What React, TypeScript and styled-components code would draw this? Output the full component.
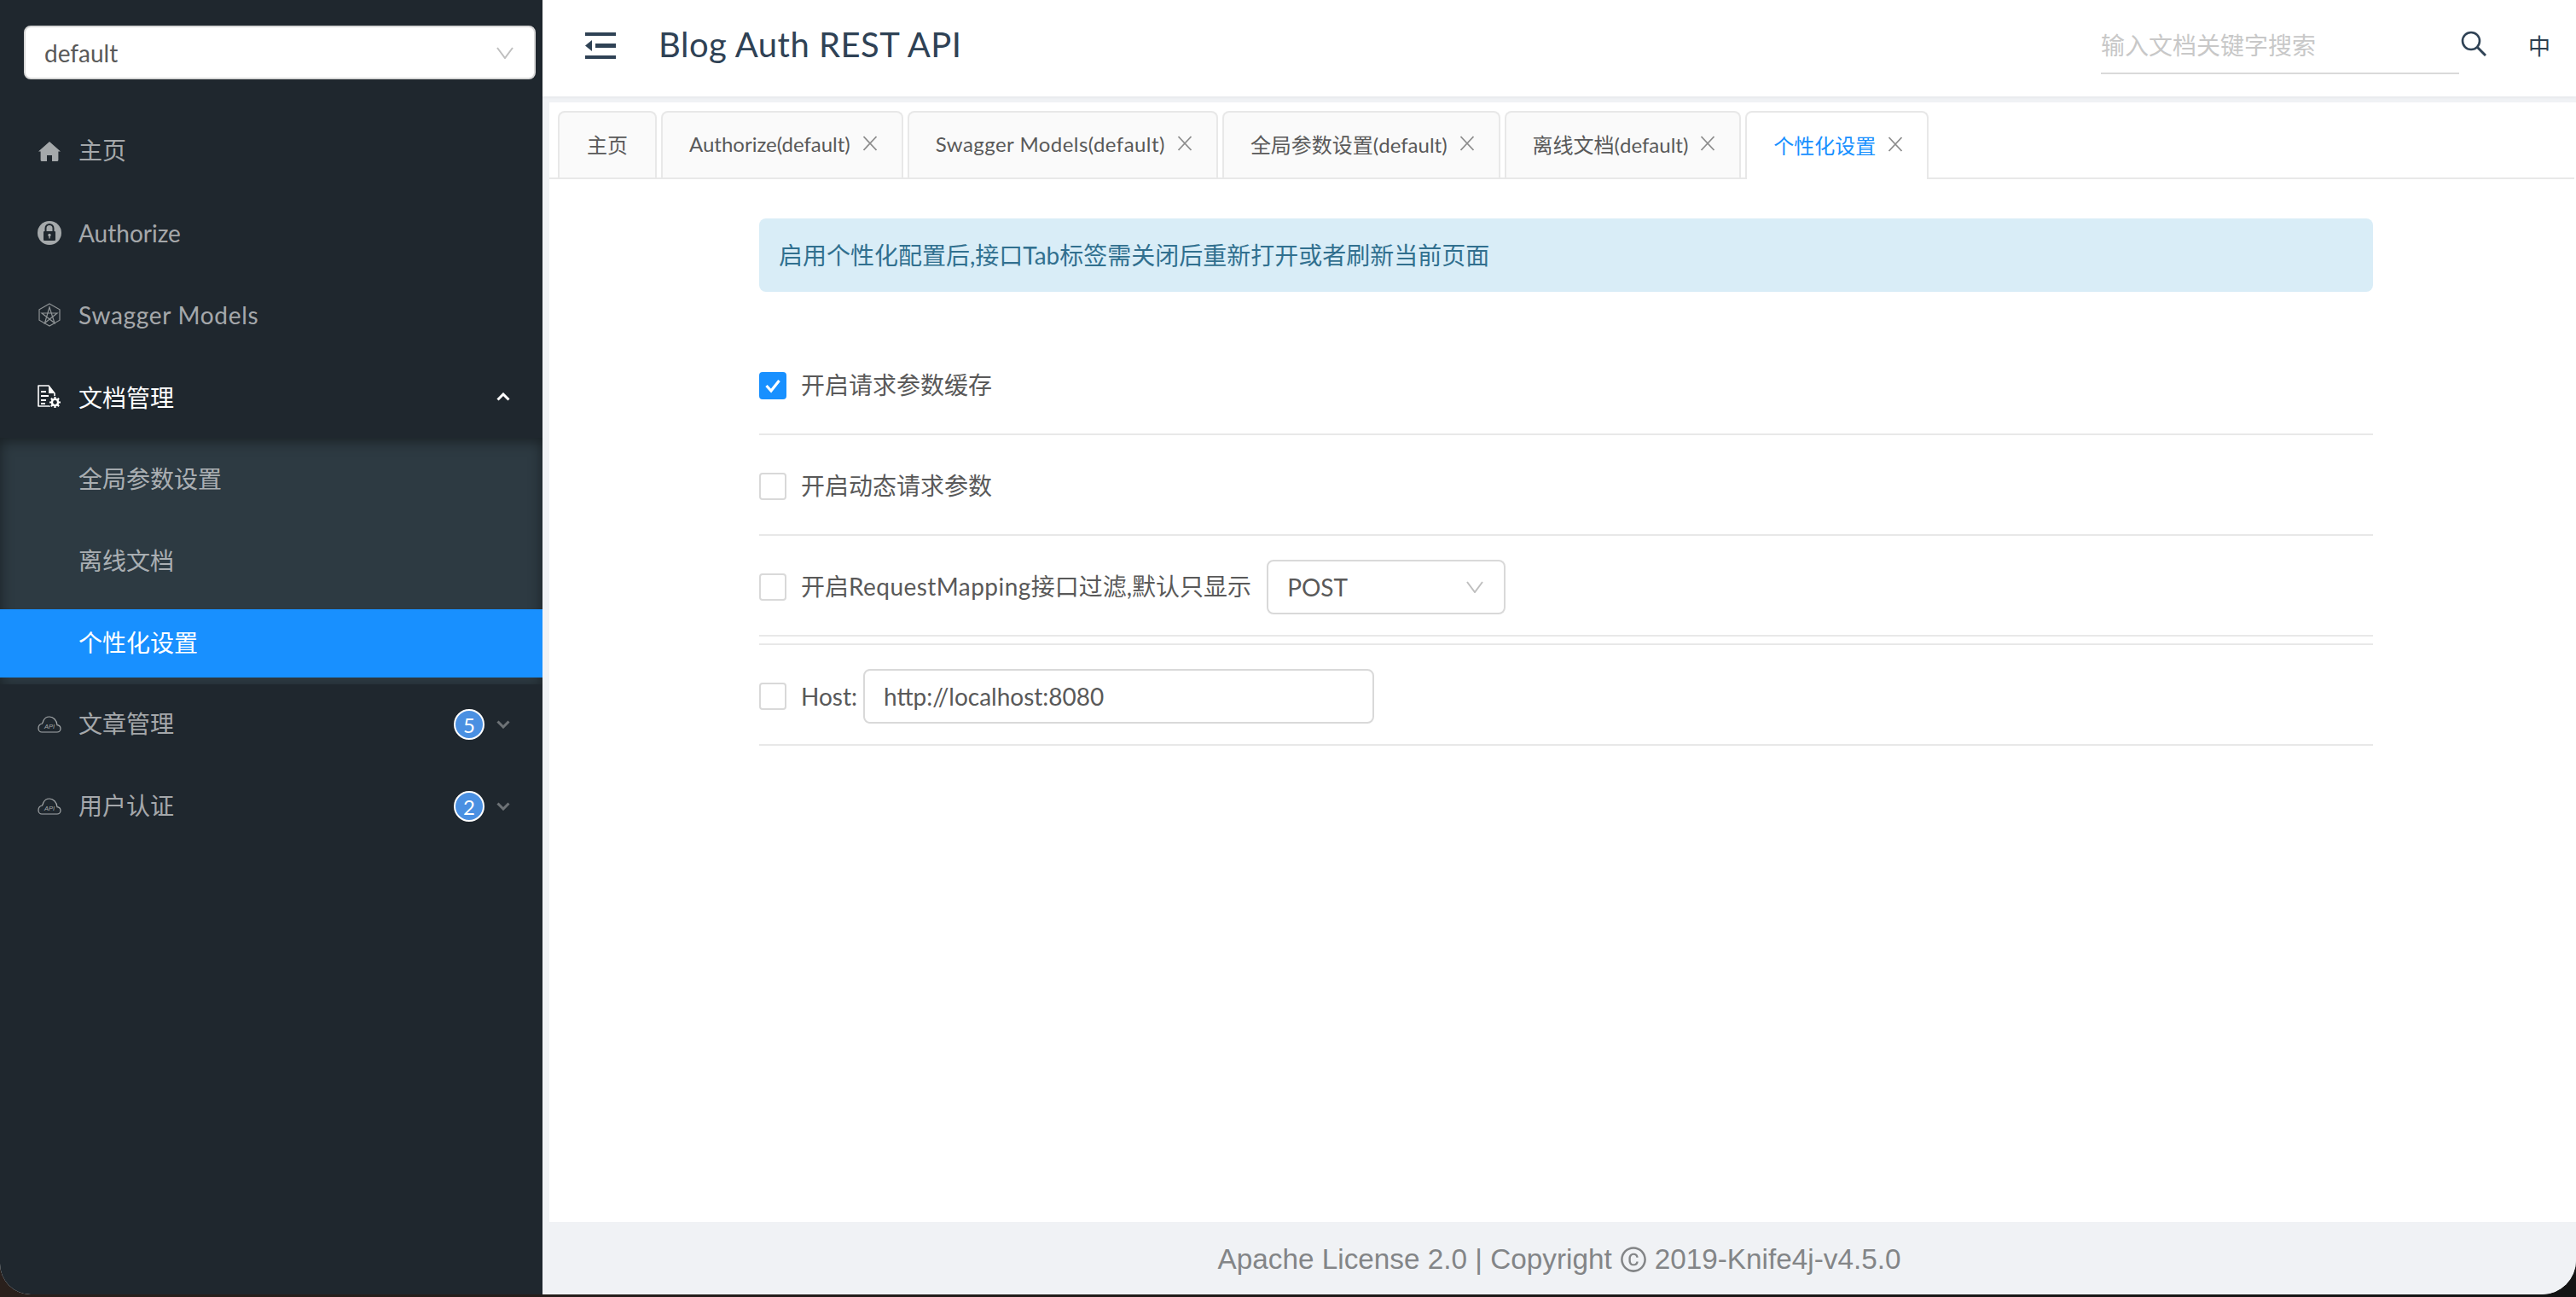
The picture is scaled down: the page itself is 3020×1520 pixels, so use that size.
import * as React from "react";
import styled, { createGlobalStyle } from "styled-components";
import { AiOutlineCopyright } from "react-icons/ai";

const FONT = `Lato, "Noto Sans CJK SC", sans-serif`;

const GlobalStyle = createGlobalStyle`
  html, body {
    margin: 0;
    padding: 0;
    background: #1a1a1a;
  }
  * {
    box-sizing: border-box;
  }
`;

const Page = styled.div`
  width: 3020px;
  height: 1520px;
  overflow: hidden;
  background: linear-gradient(to right, #2a201c 0, #141414 100%);
  font-family: ${FONT};
`;

const Window = styled.div`
  display: flex;
  width: 3020px;
  height: 1517px;
  overflow: hidden;
  border-radius: 0 0 40px 36px;
  background: #f0f2f5;
`;

/* sidebar */
const Sidebar = styled.aside`
  width: 636px;
  flex: none;
  padding-top: 30px;
  background: #1f272e;
`;

const SideSelect = styled.div`
  display: flex;
  align-items: center;
  justify-content: space-between;
  width: 600px;
  height: 63px;
  margin-left: 28px;
  padding: 0 24px 0 22px;
  border: 2px solid #d9d9d9;
  border-radius: 8px;
  background: #fff;
  color: #595959;
  font-size: 28px;
`;

const Menu = styled.nav`
  margin-top: 44px;
`;

const Item = styled.div<{ $active?: boolean; $open?: boolean; $indent?: boolean }>`
  display: flex;
  align-items: center;
  height: 80px;
  margin-bottom: 16px;
  padding: 0 38px 0 ${(p) => (p.$indent ? "92px" : "44px")};
  background: ${(p) => (p.$active ? "#1890ff" : "transparent")};
  color: ${(p) => (p.$active || p.$open ? "#fff" : "rgba(255, 255, 255, 0.62)")};
  font-size: 28px;
`;

const SubMenu = styled.div`
  margin: -8px 0 7px;
  padding: 9px 0 8px;
  background: #2d3a42;
  box-shadow: inset 0 4px 16px rgba(0, 0, 0, 0.45);

  & > ${Item}:last-child {
    margin-bottom: 0;
  }
`;

const IconSlot = styled.span`
  display: flex;
  align-items: center;
  justify-content: center;
  width: 28px;
  height: 28px;
  margin-right: 20px;
  flex: none;
`;

const ItemText = styled.span<{ $cjk?: boolean }>`
  flex: 1;
  padding-bottom: ${(p) => (p.$cjk ? "4px" : "0")};
`;

const Spaced = styled.span<{ $by: string }>`
  letter-spacing: ${(p) => p.$by};
`;

const Badge = styled.span`
  display: flex;
  align-items: center;
  justify-content: center;
  width: 36px;
  height: 36px;
  margin-right: 14px;
  border: 2px solid #fff;
  border-radius: 50%;
  background: #4a90e2;
  color: #fff;
  font-size: 24px;
`;

/* main column */
const Main = styled.main`
  display: flex;
  flex-direction: column;
  flex: 1;
  min-width: 0;
`;

const Header = styled.header`
  display: flex;
  align-items: center;
  height: 113px;
  padding-left: 50px;
  background: #fff;
  box-shadow: 0 1px 4px rgba(0, 21, 41, 0.06);
`;

const FoldWrap = styled.span`
  display: flex;
  margin-bottom: 6px;
`;

const Title = styled.h1`
  flex: 1;
  margin: 0 0 9px 50px;
  color: #2f4255;
  font-size: 40px;
  font-weight: 400;
  letter-spacing: 0.5px;
`;

const SearchBox = styled.div`
  display: flex;
  align-items: center;
  width: 420px;
  height: 60px;
  padding-bottom: 8px;
  border-bottom: 2px solid #d9d9d9;
  color: #c8c8c8;
  font-size: 28px;
`;

const SearchIconWrap = styled.span`
  display: flex;
  margin: 0 49px 12px 2px;
`;

const Lang = styled.span`
  margin-right: 30px;
  margin-bottom: 8px;
  color: #2c3e50;
  font-size: 26px;
`;

const Content = styled.section`
  display: flex;
  flex-direction: column;
  flex: 1;
  min-height: 0;
  margin: 7px 0 0 8px;
  background: #fff;
`;

const TabBar = styled.div`
  display: flex;
  gap: 5px;
  height: 80px;
  margin: 10px 2px 0 0;
  padding-left: 10px;
  border-bottom: 2px solid #e8e8e8;
`;

const Tab = styled.div<{ $active?: boolean; $closable?: boolean }>`
  display: flex;
  align-items: center;
  gap: 14px;
  height: ${(p) => (p.$active ? "80px" : "78px")};
  padding: 0 ${(p) => (p.$closable ? "28px" : "32px")} 4px ${(p) => (p.$closable ? "31px" : "32px")};
  border: 2px solid #e8e8e8;
  border-bottom: none;
  border-radius: 8px 8px 0 0;
  background: ${(p) => (p.$active ? "#fff" : "#fafafa")};
  color: ${(p) => (p.$active ? "#1890ff" : "#595959")};
  font-size: 24px;
`;

const Panel = styled.div`
  width: 1892px;
  margin: 46px 0 0 246px;
`;

const Alert = styled.div`
  display: flex;
  align-items: center;
  height: 86px;
  margin-bottom: 50px;
  padding: 0 0 3px 23px;
  border-radius: 8px;
  background: #d9edf7;
  color: #31708f;
  font-size: 28px;
`;

const Row = styled.div<{ $split?: boolean }>`
  display: flex;
  align-items: center;
  height: ${(p) => (p.$split ? "120px" : "118px")};
  padding-top: 28px;
  padding-bottom: 24px;
  margin-top: ${(p) => (p.$split ? "8px" : "0")};
  border-top: ${(p) => (p.$split ? "2px solid #e8e8e8" : "none")};
  border-bottom: 2px solid #e8e8e8;
`;

const Check = styled.span<{ $checked?: boolean }>`
  display: flex;
  align-items: center;
  justify-content: center;
  width: 32px;
  height: 32px;
  flex: none;
  border: 2px solid ${(p) => (p.$checked ? "#1890ff" : "#d9d9d9")};
  border-radius: 4px;
  background: ${(p) => (p.$checked ? "#1890ff" : "#fff")};
`;

const Label = styled.span<{ $cjk?: boolean }>`
  margin-left: 17px;
  padding-bottom: ${(p) => (p.$cjk ? "4px" : "0")};
  color: #595959;
  font-size: 28px;
`;

const FieldSelect = styled.div`
  display: flex;
  align-items: center;
  justify-content: space-between;
  width: 280px;
  height: 64px;
  margin-left: 18px;
  padding: 0 24px 0 22px;
  border: 2px solid #d9d9d9;
  border-radius: 8px;
  color: #595959;
  font-size: 28px;
`;

const HostInput = styled.div`
  display: flex;
  align-items: center;
  width: 599px;
  height: 64px;
  margin-left: 7px;
  padding: 0 22px;
  border: 2px solid #d9d9d9;
  border-radius: 8px;
  color: #595959;
  font-size: 28px;
`;

const Footer = styled.footer`
  display: flex;
  align-items: center;
  justify-content: center;
  gap: 8px;
  height: 85px;
  padding-top: 2px;
  background: #f0f2f5;
  color: #838587;
  font-family: "Liberation Sans", Arial, sans-serif;
  font-size: 33.3px;
`;

/* drawings */
const ThinChevron = () => (
  <svg width="20" height="14" viewBox="0 0 20 14" fill="none">
    <path d="M1 1l9 12 9-12" stroke="#bfbfbf" strokeWidth="2" />
  </svg>
);

const BoldChevron = ({ up, color }: { up?: boolean; color: string }) => (
  <svg width="16" height="10" viewBox="0 0 16 10" fill="none">
    <path d={up ? "M1.5 8.5L8 2l6.5 6.5" : "M1.5 1.5L8 8l6.5-6.5"} stroke={color} strokeWidth="3" />
  </svg>
);

const CloseX = () => (
  <svg width="18" height="18" viewBox="0 0 18 18" fill="none">
    <path d="M1.500 1l15 16M16.500 1l-15 16" stroke="#8c8c8c" strokeWidth="1.800" />
  </svg>
);

const HomeIcon = () => (
  <svg width="26" height="23" viewBox="0 0 26 23">
    <path
      fill="#a5a9ab"
      d="M13 0l13 11.500h-2.600V21.500a1.500 1.500 0 0 1-1.500 1.500H16v-7h-6v7H4.100a1.500 1.500 0 0 1-1.500-1.500V11.500H0z"
    />
  </svg>
);

const LockIcon = () => (
  <svg width="28" height="28" viewBox="0 0 28 28">
    <circle cx="14" cy="14" r="14" fill="#a5a9ab" />
    <path d="M9.500 12V8.500a4.500 4.500 0 0 1 9 0V12" fill="none" stroke="#1f272e" strokeWidth="2" />
    <rect x="7" y="12" width="14" height="11" rx="1" fill="#1f272e" />
    <circle cx="14" cy="16.500" r="1.700" fill="#a5a9ab" />
    <rect x="13.300" y="16.500" width="1.400" height="4" fill="#a5a9ab" />
  </svg>
);

const SwaggerIcon = () => (
  <svg width="26" height="28" viewBox="0 0 26 28" fill="none" stroke="#8f9496" strokeWidth="1.200">
    <path d="M13 1l12 6.800v12.400L13 27 1 20.200V7.800z" />
    <path d="M13 5L7.500 23.500 22 12H4l15 11.500z" />
  </svg>
);

const DocGearIcon = () => (
  <svg width="28" height="28" viewBox="0 0 28 28" fill="none">
    <path d="M1 1h12l7 9v15H1z" stroke="#fff" strokeWidth="1.600" strokeLinejoin="round" />
    <path d="M13 1l7 9h-7z" fill="#fff" />
    <path d="M4 8h6M4 13h9M4 18h6M4 22h5" stroke="#fff" strokeWidth="1.800" />
    <circle cx="20.500" cy="20.500" r="7.500" fill="#1f272e" />
    <circle cx="20.500" cy="20.500" r="3.600" stroke="#fff" strokeWidth="2.400" />
    <path
      d="M20.500 14v2.600M20.500 24.400V27M14 20.500h2.600M24.400 20.500H27M15.900 15.900l1.800 1.800M23.300 23.300l1.800 1.800M25.100 15.900l-1.800 1.800M17.700 23.300l-1.800 1.800"
      stroke="#fff"
      strokeWidth="2.200"
    />
  </svg>
);

const CloudIcon = () => (
  <svg width="28" height="20" viewBox="0 0 28 20" fill="none">
    <path
      d="M5 19h18a4 4 0 0 0 4-4c0-2.500-1.700-4-4-4.300C22.500 5 18.500 1 14 1c-3.500 0-6 2-7.200 4.800C6.500 7 6 8 5.500 9 3 9.500 1 11.500 1 14.500 1 17 2.700 19 5 19z"
      stroke="#a5a9ab"
      strokeWidth="1.200"
    />
    <text x="14" y="15" textAnchor="middle" fontSize="7.500" fontStyle="italic" fill="#a5a9ab" fontFamily="Liberation Sans, sans-serif">
      API
    </text>
  </svg>
);

const FoldIcon = () => (
  <svg width="36" height="31" viewBox="0 0 36 31">
    <g fill="#2f4255">
      <rect x="0" y="0" width="36" height="4" />
      <rect x="12" y="13" width="24" height="5" />
      <rect x="0" y="27" width="36" height="4" />
      <path d="M8 9v13L0 15.500z" />
    </g>
  </svg>
);

const SearchIcon = () => (
  <svg width="30" height="30" viewBox="0 0 30 30" fill="none" stroke="#2f4255">
    <circle cx="12" cy="12" r="10" strokeWidth="2.600" />
    <path d="M19 19l10 10" strokeWidth="3" />
  </svg>
);

const CheckMark = () => (
  <svg width="20" height="18" viewBox="0 0 20 18" fill="none">
    <path d="M2.500 9l5.500 6 9.500-12" stroke="#fff" strokeWidth="3.200" />
  </svg>
);

const tabs = [
  { text: "主页" },
  { text: "Authorize(default)", close: true },
  { text: "Swagger Models(default)", close: true, spread: "0.45px" },
  { text: "全局参数设置(default)", close: true },
  { text: "离线文档(default)", close: true },
  { text: "个性化设置", close: true, active: true },
];

const App: React.FC = () => {
  return (
    <Page>
      <GlobalStyle />
      <Window>
        <Sidebar>
          <SideSelect>
            default
            <ThinChevron />
          </SideSelect>
          <Menu>
            <Item>
              <IconSlot><HomeIcon /></IconSlot>
              <ItemText $cjk>主页</ItemText>
            </Item>
            <Item>
              <IconSlot><LockIcon /></IconSlot>
              <ItemText>Authorize</ItemText>
            </Item>
            <Item>
              <IconSlot><SwaggerIcon /></IconSlot>
              <ItemText>
                <Spaced $by="0.7px">Swagger Models</Spaced>
              </ItemText>
            </Item>
            <Item $open>
              <IconSlot><DocGearIcon /></IconSlot>
              <ItemText>文档管理</ItemText>
              <BoldChevron up color="#fff" />
            </Item>
            <SubMenu>
              <Item $indent><ItemText $cjk>全局参数设置</ItemText></Item>
              <Item $indent><ItemText $cjk>离线文档</ItemText></Item>
              <Item $indent $active><ItemText $cjk>个性化设置</ItemText></Item>
            </SubMenu>
            <Item>
              <IconSlot><CloudIcon /></IconSlot>
              <ItemText $cjk>文章管理</ItemText>
              <Badge>5</Badge>
              <BoldChevron color="#6d7276" />
            </Item>
            <Item>
              <IconSlot><CloudIcon /></IconSlot>
              <ItemText $cjk>用户认证</ItemText>
              <Badge>2</Badge>
              <BoldChevron color="#6d7276" />
            </Item>
          </Menu>
        </Sidebar>
        <Main>
          <Header>
            <FoldWrap><FoldIcon /></FoldWrap>
            <Title>Blog Auth REST API</Title>
            <SearchBox>输入文档关键字搜索</SearchBox>
            <SearchIconWrap><SearchIcon /></SearchIconWrap>
            <Lang>中</Lang>
          </Header>
          <Content>
            <TabBar>
              {tabs.map((t) => (
                <Tab key={t.text} $active={t.active} $closable={t.close}>
                  <Spaced $by={t.spread || "0"}>{t.text}</Spaced>
                  {t.close && <CloseX />}
                </Tab>
              ))}
            </TabBar>
            <Panel>
              <Alert>启用个性化配置后,接口Tab标签需关闭后重新打开或者刷新当前页面</Alert>
              <Row>
                <Check $checked><CheckMark /></Check>
                <Label $cjk>开启请求参数缓存</Label>
              </Row>
              <Row>
                <Check />
                <Label $cjk>开启动态请求参数</Label>
              </Row>
              <Row>
                <Check />
                <Label $cjk>
                  开启<Spaced $by="0.45px">RequestMapping</Spaced>接口过滤,默认只显示
                </Label>
                <FieldSelect>
                  POST
                  <ThinChevron />
                </FieldSelect>
              </Row>
              <Row $split>
                <Check />
                <Label>Host:</Label>
                <HostInput>http://localhost:8080</HostInput>
              </Row>
            </Panel>
          </Content>
          <Footer>
            Apache License 2.0 | Copyright
            <AiOutlineCopyright size={34} />
            2019-Knife4j-v4.5.0
          </Footer>
        </Main>
      </Window>
    </Page>
  );
};

export default App;
